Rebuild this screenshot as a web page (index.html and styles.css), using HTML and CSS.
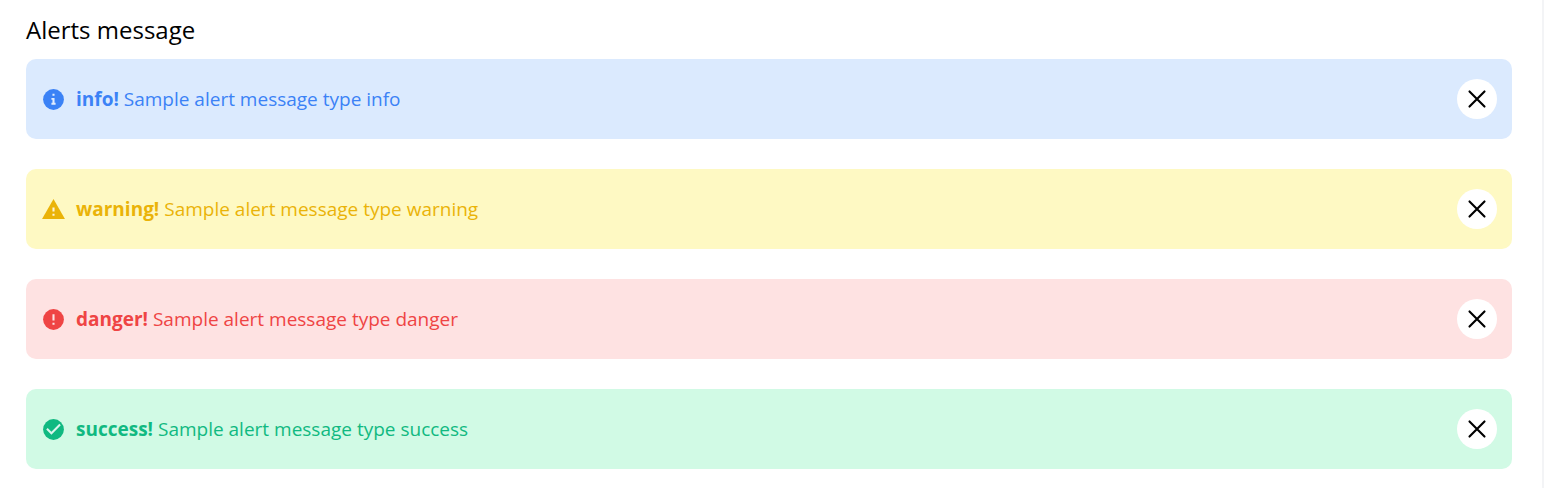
FILE: index.html
```html
<!DOCTYPE html>
<html lang="en">
<head>
<meta charset="utf-8">
<title>Alerts message</title>
<link rel="stylesheet" href="styles.css">
</head>
<body>
<main class="page">
  <h1 class="title">Alerts message</h1>
  <div class="alerts">
    <div class="alert alert-info" role="alert">
      <svg class="icon" viewBox="0 0 24 24" aria-hidden="true"><circle cx="12" cy="12" r="10" fill="currentColor"/><path class="cut" d="M11 6.500h2v2h-2zM10 10.500h3V15h1v2h-4v-2h1v-2.800h-1z"/></svg>
      <p class="text"><strong>info!</strong> Sample alert message type info</p>
      <button class="close" type="button" aria-label="Close info alert"><svg class="cross" viewBox="0 0 24 24"><path d="M6 18L18 6M6 6l12 12"/></svg></button>
    </div>
    <div class="alert alert-warning" role="alert">
      <svg class="icon" viewBox="0 0 24 24" aria-hidden="true"><path fill="currentColor" d="M1 21h22L12 2z"/><path class="cut" d="M11 10h2v4h-2zM11 16h2v2h-2z"/></svg>
      <p class="text"><strong>warning!</strong> Sample alert message type warning</p>
      <button class="close" type="button" aria-label="Close warning alert"><svg class="cross" viewBox="0 0 24 24"><path d="M6 18L18 6M6 6l12 12"/></svg></button>
    </div>
    <div class="alert alert-danger" role="alert">
      <svg class="icon" viewBox="0 0 24 24" aria-hidden="true"><circle cx="12" cy="12" r="10" fill="currentColor"/><path class="cut" d="M11 7h2v6h-2zM11 15h2v2h-2z"/></svg>
      <p class="text"><strong>danger!</strong> Sample alert message type danger</p>
      <button class="close" type="button" aria-label="Close danger alert"><svg class="cross" viewBox="0 0 24 24"><path d="M6 18L18 6M6 6l12 12"/></svg></button>
    </div>
    <div class="alert alert-success" role="alert">
      <svg class="icon" viewBox="0 0 24 24" aria-hidden="true"><circle cx="12" cy="12" r="10" fill="currentColor"/><path class="cut" d="M10 17l-5-5 1.410-1.410L10 14.170l7.590-7.590L19 8z"/></svg>
      <p class="text"><strong>success!</strong> Sample alert message type success</p>
      <button class="close" type="button" aria-label="Close success alert"><svg class="cross" viewBox="0 0 24 24"><path d="M6 18L18 6M6 6l12 12"/></svg></button>
    </div>
  </div>
</main>
</body>
</html>
```
FILE: styles.css
```css
* {
  box-sizing: border-box;
}

body {
  margin: 0;
  background: #fff;
  color: #000;
  font-family: "Segoe UI", "Open Sans", "Noto Sans", sans-serif;
}

.page {
  min-height: 100vh;
  padding: 12px 30px 19px 26px;
  border-right: 2px solid #f3f4f6;
}

.title {
  margin: 0 0 11px;
  font-size: 24px;
  font-weight: 400;
  line-height: 36px;
}

.alerts {
  display: flex;
  flex-direction: column;
  gap: 30px;
}

.alert {
  display: flex;
  align-items: center;
  gap: 10px;
  padding: 20px 15px;
  border-radius: 10px;
}

.alert-info {
  background: #dbeafe;
  color: #3b82f6;
}

.alert-warning {
  background: #fef9c3;
  color: #eab308;
}

.alert-danger {
  background: #fee2e2;
  color: #ef4444;
}

.alert-success {
  background: #d1fae5;
  color: #10b981;
}

.icon {
  flex: none;
  width: 25px;
  height: 25px;
}

.cut {
  fill: #fff;
  fill-opacity: 0.85;
}

.text {
  flex: 1;
  margin: 0;
  font-size: 19px;
  line-height: 28px;
}

.close {
  display: flex;
  flex: none;
  align-items: center;
  justify-content: center;
  width: 40px;
  height: 40px;
  padding: 0;
  border: 0;
  border-radius: 50%;
  background: #fff;
  color: #000;
  cursor: pointer;
}

.cross {
  width: 30px;
  height: 30px;
  fill: none;
  stroke: currentColor;
  stroke-width: 1.7;
  stroke-linecap: round;
}
```
